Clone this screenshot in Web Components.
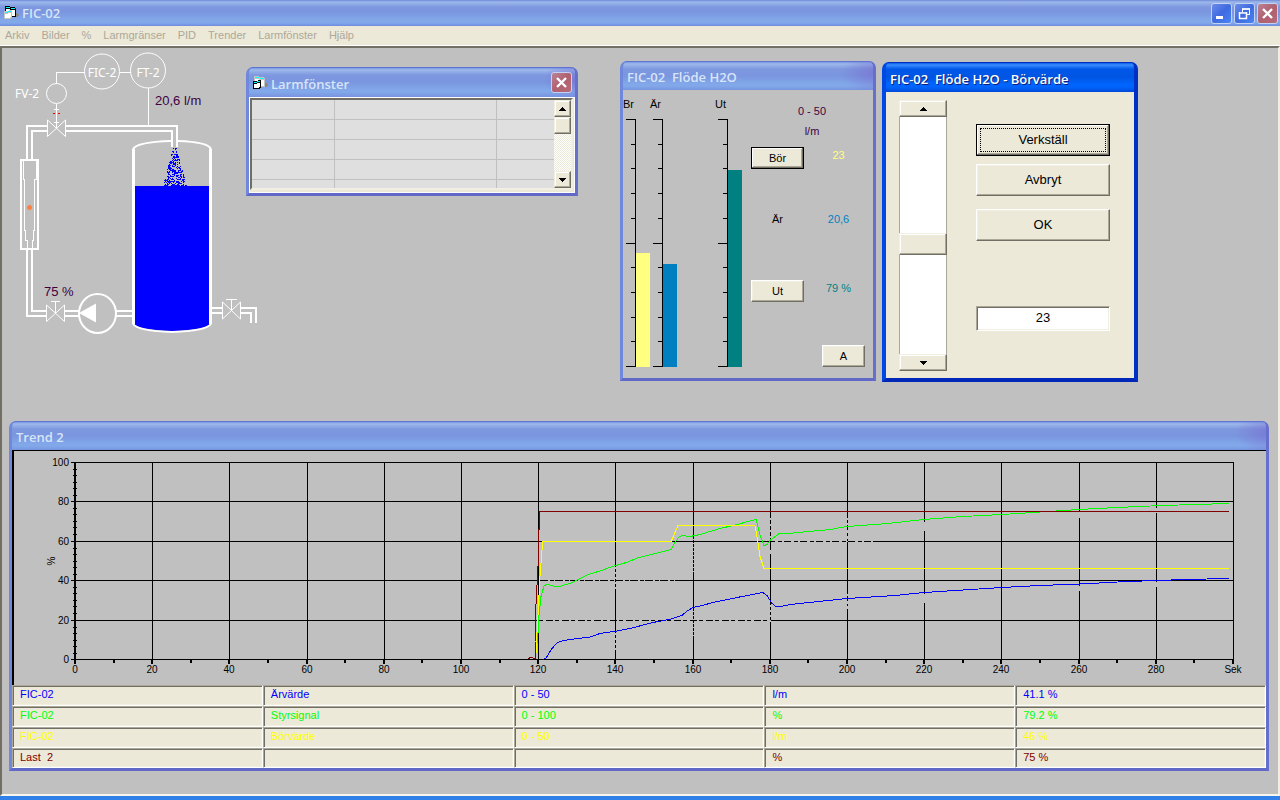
<!DOCTYPE html>
<html lang="sv">
<head>
<meta charset="utf-8">
<title>FIC-02</title>
<style>
html, body { margin: 0; height: 100%; }
body { font: 11px/16px "Liberation Sans", Arial, sans-serif; color: #000; background: #2f80e8; }
mdi-window { position: absolute; }
#larm { left: 244px; top: 19px; width: 332px; }
#regulator { left: 618px; top: 13px; width: 256px; }
#borvarde { left: 880px; top: 14px; width: 256px; }
#trend { left: 7px; right: 9px; top: 373px; }
</style>
</head>
<body>
<app-frame>
  <process-diagram></process-diagram>
  <mdi-window id="larm" heading="Larmfönster" icon closable><alarm-list></alarm-list></mdi-window>
  <mdi-window id="regulator" heading="FIC-02  Flöde H2O"><controller-panel></controller-panel></mdi-window>
  <mdi-window id="borvarde" heading="FIC-02  Flöde H2O - Börvärde" active><setpoint-panel></setpoint-panel></mdi-window>
  <mdi-window id="trend" heading="Trend 2"><trend-chart></trend-chart><trend-legend></trend-legend></mdi-window>
</app-frame>
<script>
const component = (name, html, setup) => {
  const template = document.createElement('template');
  template.innerHTML = html;
  customElements.define(name, class extends HTMLElement {
    connectedCallback() {
      if (this.shadowRoot) return;
      const root = this.attachShadow({ mode: 'open' });
      root.append(template.content.cloneNode(true));
      if (setup) setup(this, root);
    }
  });
};

component('form-icon', `
<style>:host{display:block;flex:none;width:14px;height:16px}svg{display:block;overflow:visible}</style>
<svg width="14" height="16" shape-rendering="crispEdges" aria-hidden="true">
  <path d="M12 8h2v1h1v2h-1v1h-2z" fill="#888"/>
  <path class="back" d="M1 1h5v1h5v1h1v9H7V6H1z"/>
  <path d="M2 4h4v1h5v6H8V6H2z" fill="#fff"/>
  <path d="M2 2h4v1h5v1H7V3H2z" fill="#0ff"/>
  <path class="front" d="M0 6h5V5h3v8H7v1H0z"/>
  <path d="M1 9h3V8h3v4H6v1H1z" fill="#fff"/>
  <path d="M1 7h3V6h3v1H4v1H1z" fill="#0ff"/>
</svg>`, (host, root) => {
  const flipped = host.hasAttribute('front');
  root.querySelector('.back').setAttribute('fill', flipped ? '#c4c4c4' : '#000');
  root.querySelector('.front').setAttribute('fill', flipped ? '#000' : '#c4c4c4');
});

component('caption-button', `
<style>
:host{display:block}
button{display:block;width:21px;height:21px;padding:0;border:1px solid #c3d2f3;border-radius:3px;background:linear-gradient(135deg,#6b8bea,#3f6be0 50%,#4a84f4)}
:host([kind=close]) button{background:linear-gradient(135deg,#b98496,#b0606f 50%,#b66a78)}
svg{display:block}
</style>
<button><svg width="19" height="19" fill="none" stroke="#fff" aria-hidden="true"></svg></button>`, (host, root) => {
  const kinds = {
    minimize: ['Minimera', '<path d="M4 13.5h7" stroke-width="3"/>'],
    restore: ['Återställ', '<path d="M7 5h8M14.5 5v6M12 10.500h3M7.500 5v3" stroke-width="1"/><path d="M4.500 8v6.500h7V8M7 5h8M4 9h8" stroke-width="1.500"/>'],
    close: ['Stäng', '<path d="M5 5l9 9M14 5l-9 9" stroke-width="2.400"/>']
  };
  const [label, art] = kinds[host.getAttribute('kind')];
  root.querySelector('button').setAttribute('aria-label', label);
  root.querySelector('svg').innerHTML = art;
});

component('app-frame', `
<style>
:host{display:flex;flex-direction:column;height:100vh;min-height:797px;box-sizing:border-box;border-bottom:4px solid #2f80e8}
header{display:flex;align-items:center;gap:4px;height:26px;padding:0 2px 0 4px;box-sizing:border-box;
 background:linear-gradient(#7089d8,#9db9eb 2px,#7e98df 7px,#7a96df 12px,#82a8ea 20px,#82a8ea 23px,#6f8bdc)}
h1{flex:1;margin:0;font:600 13px/26px "Open Sans","Noto Sans",sans-serif;color:#d8e4f8}
nav{display:flex;gap:12px;height:19px;padding-left:5px;background:#ece9d8;border-bottom:1px solid #fff}
nav a{line-height:19px;color:#aca899;text-decoration:none}
main{position:relative;flex:1;background:#c0c0c0;border:2px solid;border-color:#716f64 #f1efe2 #f8f6ea #716f64}
.buttons{display:flex;gap:2px}
</style>
<header><form-icon></form-icon><h1>FIC-02</h1>
<div class="buttons"><caption-button kind="minimize"></caption-button><caption-button kind="restore"></caption-button><caption-button kind="close"></caption-button></div></header>
<nav><a href="#">Arkiv</a><a href="#">Bilder</a><a href="#">%</a><a href="#">Larmgränser</a><a href="#">PID</a><a href="#">Trender</a><a href="#">Larmfönster</a><a href="#">Hjälp</a></nav>
<main><slot></slot></main>`);

component('mdi-window', `
<style>
:host{display:block;box-sizing:border-box;border:solid;border-color:#7088dc #6470cc #6068c8 #7088dc;border-width:0 3px 3px;border-radius:7px 7px 0 0;
 background:#7088dc;overflow:hidden}
header{display:flex;align-items:center;gap:4px;height:29px;margin:0 -3px;padding:0 5px 0 6px;box-sizing:border-box;border-radius:7px 7px 0 0;
 border:solid #5f74d2;border-width:1px 1px 0;
 background:radial-gradient(ellipse 34px 20px at 100% 40%,rgba(120,112,208,.7),rgba(120,130,216,0)),linear-gradient(#7c98e2,#9db9eb 2px,#7e98df 7px,#7a96df 14px,#82a8ea 22px,#82a8ea 24px,#7894e0)}
h2{flex:1;margin:0;font:600 13px/28px "Open Sans","Noto Sans",sans-serif;white-space:pre;color:#d8e4f8;padding-top:2px}
:host([icon]) header,:host([active]) header{height:30px}
:host([active]){border-color:#0040dc #0030c4 #0028b8 #0048e4;border-width:0 4px 4px;background:#0054e3}
:host([active]) header{margin:0 -4px;padding-left:7px;border-color:#0030c0;background:linear-gradient(#0a5ce8,#3a8cff 2px,#0058e8 6px,#0054e3 14px,#0066ff 22px,#0060f8 25px,#0048d8)}
:host([active]) h2{color:#fff;text-shadow:1px 1px 0 #0a1f80}
</style>
<header><h2></h2></header><slot></slot>`, (host, root) => {
  const bar = root.querySelector('header');
  root.querySelector('h2').textContent = host.getAttribute('heading');
  if (host.hasAttribute('icon')) {
    const icon = document.createElement('form-icon');
    icon.setAttribute('front', '');
    bar.prepend(icon);
  }
  if (host.hasAttribute('closable')) {
    const close = document.createElement('caption-button');
    close.setAttribute('kind', 'close');
    bar.append(close);
  }
});

component('push-button', `
<style>
:host{display:block}
button{display:block;width:100%;height:100%;padding:0;font:inherit;color:#000;background:#ece9d8;
 border:1px solid;border-color:#fff #716f64 #716f64 #fff;box-shadow:inset -1px -1px #aca899,inset 1px 1px #f1efe2;outline-offset:-5px}
:host([default]) button{border-color:#000;box-shadow:inset -1px -1px #716f64,inset 1px 1px #fff,inset -2px -2px #aca899}
:host([focused]) button{outline:1px dotted #000}
</style>
<button type="button"><slot></slot></button>`);

component('scroll-bar', `
<style>
:host{display:flex;flex-direction:column;box-sizing:border-box}
button,.thumb{flex:none;display:flex;align-items:center;justify-content:center;padding:0;width:100%;height:17px;box-sizing:border-box;background:#ece9d8;
 border:1px solid;border-color:#f1efe2 #716f64 #716f64 #f1efe2;box-shadow:inset -1px -1px #aca899,inset 1px 1px #fff}
.thumb{height:var(--thumb,17px)}
.before{flex:var(--before,0) 0 0px}
.after{flex:var(--after,1) 0 0px}
.before,.after{background:var(--track);border:solid #aca899;border-width:0 var(--edge,0px)}
</style>
<button type="button" aria-label="Upp"><svg width="7" height="4" shape-rendering="crispEdges"><path d="M3 0h1v1h1v1h1v1h1v1H0V3h1V2h1V1h1z"/></svg></button>
<div class="before"></div><div class="thumb"></div><div class="after"></div>
<button type="button" aria-label="Ned"><svg width="7" height="4" shape-rendering="crispEdges"><path d="M0 0h7v1H6v1H5v1H4v1H3V3H2V2H1V1H0z"/></svg></button>`);

component('alarm-list', `
<style>
:host{display:block;background:#ece9d8;border:1px solid #fff;padding:0 1px 2px 0;box-sizing:border-box}
.view{display:flex;height:92px;box-sizing:border-box;border:2px solid;border-color:#716f64 #f1efe2 #f1efe2 #716f64;background:#dfdfdf;overflow:hidden}
table{flex:1;border-collapse:collapse;table-layout:fixed;height:100px}
td{padding:0;height:19px;border:solid #c0c0c0;border-width:0 1px 1px 0}
td:last-child{border-right:0}
scroll-bar{width:17px;--track:repeating-conic-gradient(#fff 0 25%,#ece9d8 0 50%) 0 0/2px 2px}
</style>
<div class="view"><table aria-label="Larm"><colgroup><col style="width:82px"><col style="width:162px"><col></colgroup>
<tbody><tr><td></td><td></td><td></td></tr><tr><td></td><td></td><td></td></tr><tr><td></td><td></td><td></td></tr><tr><td></td><td></td><td></td></tr><tr><td></td><td></td><td></td></tr></tbody></table>
<scroll-bar></scroll-bar></div>`);

component('bar-gauge', `
<style>
:host{display:block;width:27px}
span{display:block;height:22px;line-height:14px}
svg{display:block}
</style>
<span><slot></slot></span>
<svg width="27" height="249" shape-rendering="crispEdges" aria-hidden="true"></svg>`, (host, root) => {
  const value = Number(host.getAttribute('value'));
  let art = '';
  for (let i = 0; i <= 10; i++) {
    const y = Math.round(i * 24.7);
    const start = i % 5 ? 8 : 3;
    art += `<rect x="${start}" y="${y}" width="${12 - start}" height="1"/>`;
  }
  const h = Math.round(value * 2.48);
  art += `<rect x="12" width="1" height="248"/><rect x="13" y="${248 - h}" width="14" height="${h}" fill="${host.getAttribute('color')}"/>`;
  root.querySelector('svg').innerHTML = art;
});

component('controller-panel', `
<style>
:host{display:flex;height:288px;background:#c0c0c0}
.gauges{display:flex;padding-top:7px}
bar-gauge:last-child{margin-left:38px}
.values{display:grid;grid-template-columns:53px 53px;column-gap:8px;grid-template-rows:46px 64px 69px 65px 21px;align-items:start;padding:11px 0 0 9px;text-align:center}
.range{grid-column:1/3;line-height:20px;padding-left:8px;color:#400040}
push-button{height:22px}
.manual{grid-column:2;justify-self:end;width:43px}
</style>
<div class="gauges"><bar-gauge value="46" color="#ffff80">Br</bar-gauge><bar-gauge value="41.5" color="#0080c0">Är</bar-gauge><bar-gauge value="79.4" color="#008080">Ut</bar-gauge></div>
<div class="values">
<div class="range"><div>0 - 50</div><div>l/m</div></div>
<push-button default>Bör</push-button><span style="color:#ffff80">23</span>
<span>Är</span><span style="color:#0080c0">20,6</span>
<push-button>Ut</push-button><span style="color:#008080">79 %</span>
<push-button class="manual">A</push-button>
</div>`);

component('setpoint-panel', `
<style>
:host{display:flex;gap:29px;height:286px;box-sizing:border-box;padding:8px 24px 7px 13px;background:#ece9d8;font-size:13px}
scroll-bar{width:48px;--track:#fff;--edge:1px;--thumb:22px;--before:54;--after:46}
form{flex:1;display:flex;flex-direction:column;padding:24px 0 40px}
push-button{height:32px;margin-bottom:8px}
push-button + push-button{margin-bottom:13px}
input{margin-top:auto;width:100%;height:25px;box-sizing:border-box;padding:0 0 2px;font:inherit;text-align:center;background:#fff;border-radius:0;
 border:1px solid;border-color:#aca899 #fff #fff #aca899;box-shadow:inset 1px 1px #716f64,inset -1px -1px #f1efe2}
</style>
<scroll-bar></scroll-bar>
<form><push-button default focused>Verkställ</push-button><push-button>Avbryt</push-button><push-button>OK</push-button>
<input type="text" value="23" aria-label="Börvärde"></form>`);

component('trend-chart', `
<style>
:host{display:block;height:235px;box-sizing:border-box;background:#c0c0c0}
svg{display:block;width:100%;height:235px}
text{font:10px "Liberation Sans",Arial,sans-serif}
</style>
<svg shape-rendering="crispEdges" role="img" aria-label="Trend"></svg>`, (host, root) => {
  const svg = root.querySelector('svg');
  // Curve points in plot units: 1158 wide (300 seconds), 197 high (100 %), origin top left.
  const curves = [
    ['#00f', '468,197 471,195.5 477,186 482,180.5 488,178 503,176 515,174.5 525,171 539,169 555,166 578,160 596,156.5 607,153 612,148.5 618,145 627,143 638,140 667,134 688,130 692,133 697,141 701,144 708,143.5 715,142 772,136 820,133 849,130 888,127.5 927,125 965,123 1005,121.5 1052,119 1082,118 1110,117 1154,116'],
    ['#0f0', '461,191 463,171 464,152.5 466,134 469,123.5 472,121.5 480,124 486,123.5 496,120.5 503,117 513,112 525,108.5 539,103.5 553,99.5 562,95.5 596,87 600,80 604,74.5 607,73 615,74 625,72 645,66 658,63 681,57 685,72.5 689,83 692,82 695,78 704,71 718,70.5 755,67 772,64 813,61 849,57 888,54 927,52 965,49.5 1004,47 1042,45 1087,43 1154,41'],
    ['#ff0', '461,191 462,170 463,152.5 465,114 467,87.5 468,79 596,79 598,75 600,70 603,63 680,63 682,74 685,94 689,106 1154,106'],
    ['#800000', '453,196 456,195 460,196 460,179 461,142 463,104 464,67 464,49 1154,49']
  ];
  // Stretches where the grid is broken: [x1, y1, x2, y2, dash].
  const breaks = [
    [700, 79, 798, 79, '3 4 2 7'], [473, 118, 607, 118, '2 4 1 8'], [468, 158, 697, 158, '3 7 2 4'],
    [540, 104, 540, 127, '2 3'], [540, 170, 540, 190, '2 3'],
    [618, 76, 618, 112, '1 3'], [618, 148, 618, 176, '1 3'],
    [695, 55, 695, 76, '2 4'], [695, 87, 695, 91, ''], [695, 142, 695, 159, '2 3'],
    [772, 55, 772, 63, '2 3'], [772, 67, 772, 78, '3 3'], [772, 131, 772, 135, '2 2'], [772, 138, 772, 146, '3 2'],
    [849, 59, 849, 68, ''], [849, 131, 849, 140, ''], [927, 53, 927, 61, ''], [927, 126, 927, 133, ''],
    [1004, 49, 1004, 55, ''], [1004, 123, 1004, 128, ''], [1081, 45, 1081, 50, ''], [1081, 119, 1081, 124, '']
  ];
  const draw = () => {
    const width = svg.clientWidth || 1254;
    const left = 63, top = 12, plot = width - left - 33;
    const X = u => left + u * plot / 1158;
    const R = (x, y, w, h) => `<rect x="${Math.round(x)}" y="${Math.round(y)}" width="${w}" height="${h}"/>`;
    let s = R(0, 0, width, 1) + R(0, 0, 2, 235);
    for (let i = 0; i <= 5; i++) {
      const y = Math.round(top + i * 39.4);
      s += R(left - 4, y, plot + 5, 1) + `<text x="57" y="${y + 4}" text-anchor="end">${100 - i * 20}</text>`;
      if (i < 5) for (let k = 1; k < 6; k++) s += R(left - 2, y + k * 6.57, 4, 1);
    }
    for (let i = 0; i <= 15; i++) {
      const x = X(i * 77.2);
      s += R(x, top, 1, 197) + R(x - 1, 209, 2, 5) +
        `<text x="${Math.round(x)}" y="223" text-anchor="middle">${i < 15 ? i * 20 : 'Sek'}</text>`;
      if (i < 15) s += R(X(i * 77.2 + 38.6) - 1, 209, 2, 4);
    }
    s += R(left - 1, top, 2, 200);
    s += `<text transform="translate(43 111) rotate(-90)" text-anchor="middle">%</text>`;
    for (const [x1, y1, x2, y2, dash] of breaks) {
      const f = x1 === x2 ? 0.5 : 0;
      s += `<path d="M${Math.round(X(x1)) + f} ${y1 + top + 0.5}L${Math.round(X(x2)) + f} ${y2 + top + 0.5}" stroke="#c0c0c0" stroke-dasharray="${dash || 'none'}"/>`;
    }
    for (const [color, points] of curves) {
      const p = points.split(' ').map(v => v.split(',').map(Number)).map(([x, y]) => `${X(x).toFixed(1)},${y + top + 0.5}`);
      s += `<polyline points="${p.join(' ')}" fill="none" stroke="${color}"/>`;
    }
    svg.innerHTML = s;
  };
  draw();
  new ResizeObserver(draw).observe(host);
});

component('trend-legend', `
<style>
:host{display:block;background:#fff}
table{width:100%;border-collapse:separate;border-spacing:0;table-layout:fixed}
td{height:19px;padding:0 0 2px 7px;box-sizing:border-box;line-height:15px;background:#ece9d8;
 border:1px solid;border-color:#aca899 #fff #fff #aca899;box-shadow:inset 1px 1px #716f64,inset -1px -1px #f1efe2}
tr{height:21px}
tr:last-child{height:20px}
</style>
<table aria-label="Trendvärden"><tbody>
<tr style="color:#00f"><td>FIC-02</td><td>Ärvärde</td><td>0 - 50</td><td>l/m</td><td>41.1 %</td></tr>
<tr style="color:#0f0"><td>FIC-02</td><td>Styrsignal</td><td>0 - 100</td><td>%</td><td>79.2 %</td></tr>
<tr style="color:#ff0"><td>FIC-02</td><td>Börvärde</td><td>0 - 50</td><td>l/m</td><td>46 %</td></tr>
<tr style="color:#800000"><td>Last&nbsp; 2</td><td></td><td></td><td>%</td><td>75 %</td></tr>
</tbody></table>`);

component('process-diagram', `
<style>
:host{display:block;width:268px}
svg{display:block}
.tag{font:12px "Noto Sans","DejaVu Sans",sans-serif;fill:#fff}
.value{font:13px "Liberation Sans",Arial,sans-serif;fill:#400040}
</style>
<svg width="268" height="292" viewBox="2 48 268 292" fill="none" stroke="#fff" stroke-width="1">
  <circle cx="102" cy="71.500" r="17.500"/><circle cx="148" cy="70.500" r="17.500"/><circle cx="56.500" cy="93.500" r="10"/>
  <path shape-rendering="crispEdges" d="M119.500 72.500h11M84.500 72.500h-28v11M56.500 104v24M54 109.500h5M54 122.500h5M148.500 88v37"/>
  <path shape-rendering="crispEdges" d="M53 113.500h2M58 113.500h2" stroke="#f00"/>
  <g stroke-width="2" shape-rendering="crispEdges">
    <path d="M27 160v-34h21M32 160v-29h16M65 126h112v21M65 131h107v16"/>
    <path d="M21 160h17v89H21zM27 250v66h20M32 250v61h15M64 311h15M64 316h15M116 311h16M116 316h16M212 308h11M212 313h11M240 308h16v15M240 313h11v10"/>
  </g>
  <path shape-rendering="crispEdges" d="M23.500 160v19h1v51h1v10h2v9M36.500 160v19h-2v51h-1v10h-1v9"/>
  <path d="M47.500 120v16.500l18-16.500v16.500zM46.500 305v16.500l18-16.500v16.500zM55.500 313v-11.500M51 301.500h9M222.500 302v17l18-17v17zM231.500 310v-10.500M226 299.500h11"/>
  <path d="M135 186h74v139q-9 5-37 6q-28-1-37-6z" fill="#00f" stroke="none"/>
  <path d="M133.500 149v175M210.500 149v175" stroke-width="3" shape-rendering="crispEdges"/>
  <path d="M133 149q4-7 38-8M178 141q30 1 33 8M133 324q5 7 39 8q34-1 39-8" stroke-width="2"/>
  <ellipse cx="97.500" cy="313.500" rx="18.500" ry="19.500" stroke-width="2"/>
  <path d="M79 313l17-9.500v19z" fill="#fff" stroke="none"/>
  <circle cx="29.500" cy="207.500" r="2.500" fill="#ff8040" stroke="none"/>
  <path class="spray" shape-rendering="crispEdges" fill="#00f" stroke="none"/>
  <g stroke="none">
    <text class="tag" x="15" y="98">FV-2</text><text class="tag" x="102" y="77" text-anchor="middle">FIC-2</text><text class="tag" x="148" y="77" text-anchor="middle">FT-2</text>
    <text class="value" x="155" y="105">20,6 l/m</text><text class="value" x="44" y="296">75 %</text>
  </g>
</svg>`, (host, root) => {
  // Droplets in a widening cone, from a fixed seed so the pattern is stable.
  let seed = 7, d = '';
  const random = () => (seed = (seed * 16807) % 2147483647) / 2147483647;
  for (let y = 148; y < 186; y++) {
    const half = 1.5 + (y - 148) * 0.28;
    for (let x = Math.round(174.5 - half); x <= 174.5 + half; x++) if (random() < 0.5) d += `M${x} ${y}h1v1h-1z`;
  }
  root.querySelector('.spray').setAttribute('d', d);
});
</script>
</body>
</html>
